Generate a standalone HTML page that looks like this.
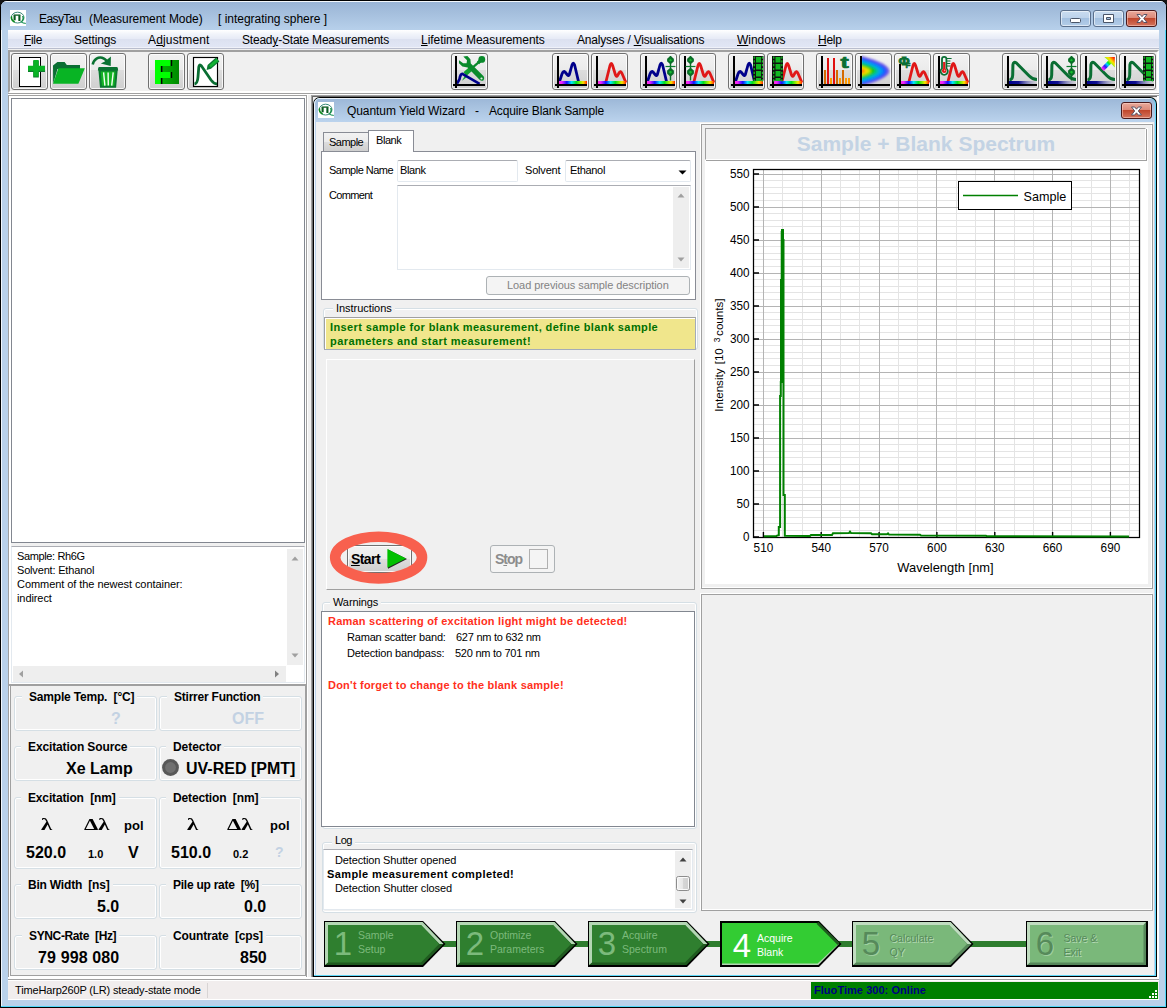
<!DOCTYPE html>
<html lang="en">
<head>
<meta charset="utf-8">
<title>EasyTau (Measurement Mode) [ integrating sphere ]</title>
<style>
*{box-sizing:border-box;margin:0;padding:0}
html,body{width:1167px;height:1008px;overflow:hidden;background:#141414}
body{position:relative;font-family:"Liberation Sans",sans-serif;font-size:11px;color:#000}
.a{position:absolute}
.t{position:absolute;white-space:nowrap;line-height:1}
svg{position:absolute;overflow:visible}
#frame{left:0;top:0;width:1167px;height:1008px;background:#b9d1ea;border:1px solid #000;border-radius:7px 7px 0 0}
#titlegrad{left:1px;top:1px;width:1165px;height:29px;border-radius:6px 6px 0 0;background:linear-gradient(#f4f8fc 0,#f4f8fc 1px,#9ab5d6 1px,#a5bfdd 12px,#b6cfea 28px)}
#client{left:8px;top:30px;width:1151px;height:970px;background:#f0f0f0}
#menubar{left:8px;top:30px;width:1151px;height:19px;background:linear-gradient(#ffffff 0,#f1f4fa 4px,#e6eaf6 9px,#dce1f0 9px,#e1e6f5 17px,#eff1f9 17px,#eff1f9 18px,#b9bdcd 18px)}
.mi{top:34px;font-size:12px;color:#000}
.mi u{text-decoration:underline;text-underline-offset:1px}
.ttl{top:13px;font-size:12px;color:#000;white-space:pre}
.cap{top:10px;height:17px;border:1px solid #5a6f8c;border-radius:3px;background:linear-gradient(#c9dcf0 0,#bdd3eb 45%,#a3c0e0 50%,#b4cde8 100%);box-shadow:inset 0 0 0 1px rgba(255,255,255,.55)}
.capx{border-color:#4a1a1c;background:linear-gradient(#e9a99b 0,#dd8a79 45%,#c0472d 50%,#d4745e 100%);box-shadow:inset 0 0 0 1px rgba(255,220,210,.5)}
.tb{top:53px;width:37px;height:37px;border:1px solid #707070;border-radius:3px;background:linear-gradient(#f2f2f2 0,#ebebeb 45%,#dddddd 46%,#cfcfcf 100%);box-shadow:inset 0 0 0 1px rgba(255,255,255,.8)}
.tb svg{left:-1px;top:-1px;width:37px;height:37px}

.gb{border:1px solid #d5dfe5;border-radius:3px;box-shadow:inset 0 0 0 1px #fff}
.gl{font-weight:bold;font-size:12px;background:#f0f0f0;padding:0 3px 0 7px;white-space:pre}
.big{font-weight:bold;font-size:16px}
.dis{color:#c3d2e3}
.sb{background:#eeeeee}
</style>
</head>
<body>
<div id="frame" class="a"></div>
<div class="a" style="left:1165px;top:8px;width:1px;height:999px;background:#4fd6f8"></div><div class="a" style="left:1px;top:1006px;width:1165px;height:1px;background:#4fd6f8"></div><div class="a" style="left:1px;top:6px;width:1px;height:1000px;background:#f0f6fc"></div>
<div id="titlegrad" class="a"></div>
<div id="client" class="a"></div>
<div class="t ttl" style="left:39px;letter-spacing:-0.576px">EasyTau</div><div class="t ttl" style="left:89px;letter-spacing:-0.062px">(Measurement Mode)</div><div class="t ttl" style="left:218px;letter-spacing:-0.018px">[ integrating sphere ]</div>
<div id="menubar" class="a"></div>
<div class="t mi" style="left:24px;letter-spacing:-0.340px"><u>F</u>ile</div>
<div class="t mi" style="left:74px;letter-spacing:-0.172px">Settin<u>g</u>s</div>
<div class="t mi" style="left:148px;letter-spacing:0.154px">A<u>d</u>justment</div>
<div class="t mi" style="left:242px;letter-spacing:-0.203px">Stead<u>y</u>-State Measurements</div>
<div class="t mi" style="left:421px;letter-spacing:-0.044px"><u>L</u>ifetime Measurements</div>
<div class="t mi" style="left:577px;letter-spacing:-0.183px">Analyses / <u>V</u>isualisations</div>
<div class="t mi" style="left:737px;letter-spacing:-0.027px"><u>W</u>indows</div>
<div class="t mi" style="left:818px;letter-spacing:-0.247px"><u>H</u>elp</div>
<div class="a cap" style="left:1060px;width:31px"></div>
<div class="a cap" style="left:1093px;width:31px"></div>
<div class="a cap capx" style="left:1126px;width:31px"></div>
<svg style="left:1060px;top:10px" width="97" height="17" viewBox="0 0 97 17">
<rect x="10.5" y="8.5" width="10" height="4" rx="1" fill="#fff" stroke="#4a5568"/>
<path d="M43.5 4.5h10v8h-10z M46.5 7.5v2h4v-2z" fill="#fff" fill-rule="evenodd" stroke="#4a5568"/>
<path d="M77 4.5h3.2l1.8 2.2l1.8-2.2h3.2l-3.2 4l3.2 4h-3.2l-1.8-2.2l-1.8 2.2h-3.2l3.2-4z" fill="#fff" stroke="#4a4a60" stroke-width=".9"/>
</svg>
<!-- app icon -->
<svg style="left:10px;top:10px" width="16" height="16" viewBox="0 0 16 16"><rect width="16" height="16" fill="#fff"/>
<ellipse cx="7.6" cy="7.6" rx="6.4" ry="5.4" fill="none" stroke="#3a8a7a" stroke-width="1"/>
<path d="M1.6 6.4q-.8 3.6 3 5.6" stroke="#0a8a1a" stroke-width="1.5" fill="none"/>
<path d="M12.6 6q1.6 3-1 5.6" stroke="#0a8a3a" stroke-width="1.3" fill="none"/>
<path d="M4.6 5.2v5M9.4 5.2v5.8" stroke="#0a5a20" stroke-width="2.1" fill="none"/>
<path d="M3.6 5.1h6.8" stroke="#0a5a20" stroke-width="1.3" fill="none"/>
<path d="M10.6 11.6q2.2 1.8 5.2 1.8" stroke="#0a8a4a" stroke-width="1" fill="none"/></svg>
<div class="a" style="left:8px;top:50px;width:1151px;height:43px;border:2px solid;border-color:#a0a0a0 #fff #fff #a0a0a0;background:#f0f0f0"></div>
<div class="a" style="left:8px;top:93px;width:1151px;height:1px;background:#a0a0a0"></div><div class="a" style="left:8px;top:94px;width:1151px;height:1px;background:#fff"></div>
<div class="a tb" style="left:11px"><svg viewBox="0 0 37 37"><rect x="8.5" y="4.5" width="21" height="29" fill="#fff" stroke="#000"/><path d="M25 7v17M17 15.5h17" stroke="#0c7a2c" stroke-width="5.6" fill="none" transform="translate(0,0.6)"/><path d="M25 7v16.4M17 15.2h17" stroke="#08b424" stroke-width="5" fill="none"/></svg></div>
<div class="a tb" style="left:50px"><svg viewBox="0 0 37 37"><path d="M3 12.6l4.4-3.6h7.2l2.2 3h13.2v4H7.5L3.2 30.6z" fill="#0a6e33"/><path d="M8.4 15.3h26.5l-6.5 15.4H3z" fill="#08b424"/></svg></div>
<div class="a tb" style="left:89px"><svg viewBox="0 0 37 37"><path d="M3.7 11.6C5 5.6 9.6 3.9 13 4.7C15.6 5.3 17.2 7 18.2 8.8" stroke="#0a7232" stroke-width="2.5" fill="none"/><path d="M21.9 3.4L21.7 12.9L11.8 10.5L15.8 8.5z" fill="#0a7232"/><path d="M9.2 15q.2-1 1.1-1h17.4q.9 0 1.1 1l.3 2.6h-20.2z" fill="#0a7232"/><path d="M9.4 17h19.3l-1.6 17.8h-16.1z" fill="#0a7a30"/><path d="M11.7 18.6h14.8l-1.2 14.2h-12.4z" fill="#14b424"/><path d="M14.6 19.4l1.3 13.2M19.1 19.4l.2 13.2M24.2 19.4l-1.5 13.2" stroke="#f4fff4" stroke-width="1.4" fill="none"/></svg></div>
<div class="a tb" style="left:148px"><svg viewBox="0 0 37 37"><rect x="7" y="7" width="24" height="24" fill="#008c00"/><linearGradient id="g4" x1="0" x2="1"><stop offset="0" stop-color="#00b400"/><stop offset="1" stop-color="#008800"/></linearGradient><rect x="13" y="7" width="18" height="24" fill="url(#g4)"/><path d="M7 7h16v6h-10v6h10v6h-10v6h-6z" fill="#00ff00"/><path d="M23.4 7v6M13.6 13v6M23.4 19v6M13.6 25v6" stroke="#000" stroke-width="1.6" fill="none"/></svg></div>
<div class="a tb" style="left:187px"><svg viewBox="0 0 37 37"><rect x="6.5" y="4.5" width="24" height="29" fill="#fff" stroke="#000" stroke-width="1.15"/><path d="M7.5 31 Q10.5 30.5 11 24 L11.8 14 Q12.3 10.5 14.5 13 L24 27 Q27 31 30 31" stroke="#0a6e33" stroke-width="2.8" fill="none"/><path d="M19.6 17l1-5l8.4-7.4l3.4 3.8l-8.4 7.4z" fill="#0a7a33"/><path d="M22 12.4l7.6-6.6l1.8 2l-7.6 6.6z" fill="#12b432"/></svg></div>
<div class="a tb" style="left:451px"><svg viewBox="0 0 37 37"><circle cx="30.8" cy="6.4" r="3.4" fill="#0a8a2c"/><path d="M29 8L27 10" stroke="#0a8a2c" stroke-width="3.2" fill="none"/><path d="M27.6 9.4L20.6 15.4" stroke="#0a8a2c" stroke-width="2.2" fill="none"/><path d="M19.6 16L14 21" stroke="#10a030" stroke-width="4.8" fill="none"/><path d="M15.2 20.2L11 27.8L16.6 23.4z" fill="#10a030"/><path d="M12.3 3.4L16.4 3.1L19.4 6.2L19.8 10.6L32.6 23.2Q34.2 25.6 32.6 27.2Q30.6 28.6 28.6 26.8L16.6 14.4L11.4 13.4L8 10.2L8 7.2L12.2 10.2L15.6 10.2L16 7.2Z" fill="#0a8a2c"/><circle cx="30.5" cy="25.5" r="1.1" fill="#e4ece4"/><path d="M6 30.6L8.4 26.4Q9.6 20.4 11.4 20.8L28.6 30.8" stroke="#00008b" stroke-width="2.7" fill="none" stroke-linejoin="round"/><g transform="translate(-1,0)"><path d="M6 3v32M3 32h32" stroke="#000" stroke-width="2" fill="none" shape-rendering="crispEdges" transform="translate(0,0)"/></g></svg></div>
<div class="a tb" style="left:552px"><svg viewBox="0 0 37 37"><path d="M7.5 28.5 L10 21 Q11.5 17.5 13 19 L15.5 22 Q16.8 23.5 17.5 21 L20 12 Q21.3 8.5 22.6 12 L26.5 28.5" stroke="#00008b" stroke-width="2.8" fill="none" stroke-linejoin="round" stroke-linecap="round"/><linearGradient id="rb1" x1="0" x2="1" y1="0" y2="0"><stop offset="0" stop-color="#ff30e0"/><stop offset=".1" stop-color="#f020ff"/><stop offset=".28" stop-color="#1010ff"/><stop offset=".45" stop-color="#00e8ff"/><stop offset=".62" stop-color="#00e020"/><stop offset=".78" stop-color="#a0f000"/><stop offset=".86" stop-color="#ffe000"/><stop offset=".94" stop-color="#ff8000"/><stop offset="1" stop-color="#ff2000"/></linearGradient><rect x="7" y="28" width="28" height="3" fill="url(#rb1)"/><path d="M6 3v32M3 32h32" stroke="#000" stroke-width="2" fill="none" shape-rendering="crispEdges" transform="translate(0,0)"/></svg></div>
<div class="a tb" style="left:591px"><svg viewBox="0 0 37 37"><path d="M15 28.5 L19 12.5 Q20.3 8.5 21.6 12.5 L24.5 22 Q25.5 24.5 26.6 22.5 L28.3 19.5 Q29.6 17.5 30.8 20 L34.5 28.5" stroke="#e01818" stroke-width="2.8" fill="none" stroke-linejoin="round" stroke-linecap="round"/><linearGradient id="rb2" x1="0" x2="1" y1="0" y2="0"><stop offset="0" stop-color="#ff30e0"/><stop offset=".1" stop-color="#f020ff"/><stop offset=".28" stop-color="#1010ff"/><stop offset=".45" stop-color="#00e8ff"/><stop offset=".62" stop-color="#00e020"/><stop offset=".78" stop-color="#a0f000"/><stop offset=".86" stop-color="#ffe000"/><stop offset=".94" stop-color="#ff8000"/><stop offset="1" stop-color="#ff2000"/></linearGradient><rect x="7" y="28" width="28" height="3" fill="url(#rb2)"/><path d="M6 3v32M3 32h32" stroke="#000" stroke-width="2" fill="none" shape-rendering="crispEdges" transform="translate(0,0)"/></svg></div>
<div class="a tb" style="left:640px"><svg viewBox="0 0 37 37"><path d="M7.5 28.5 L10 21 Q11.5 17.5 13 19 L15.5 22 Q16.8 23.5 17.5 21 L20 12 Q21.3 8.5 22.6 12 L26.5 28.5" stroke="#00008b" stroke-width="2.8" fill="none" stroke-linejoin="round" stroke-linecap="round"/><linearGradient id="rb3" x1="0" x2="1" y1="0" y2="0"><stop offset="0" stop-color="#ff30e0"/><stop offset=".1" stop-color="#f020ff"/><stop offset=".28" stop-color="#1010ff"/><stop offset=".45" stop-color="#00e8ff"/><stop offset=".62" stop-color="#00e020"/><stop offset=".78" stop-color="#a0f000"/><stop offset=".86" stop-color="#ffe000"/><stop offset=".94" stop-color="#ff8000"/><stop offset="1" stop-color="#ff2000"/></linearGradient><rect x="7" y="28" width="28" height="3" fill="url(#rb3)"/><path d="M6 3v32M3 32h32" stroke="#000" stroke-width="2" fill="none" shape-rendering="crispEdges" transform="translate(0,0)"/><path d="M30.5 3v24.5" stroke="#0a6e28" stroke-width="1.4" fill="none"/><path d="M25.5 13.5h10" stroke="#0a7a2c" stroke-width="1.2" fill="none"/><path d="M30.5 4.2l2.3 2.2v1.6l-2.3 1.9l-2.3-1.9v-1.6z" fill="#14c02c" stroke="#0a6e28" stroke-width="2.2" stroke-linejoin="round"/><path d="M30.5 16.1l2.3 2v2l-2.3 2.2l-2.3-2.2v-2z" fill="#14c02c" stroke="#0a6e28" stroke-width="2.2" stroke-linejoin="round"/></svg></div>
<div class="a tb" style="left:679px"><svg viewBox="0 0 37 37"><path d="M15 28.5 L19 12.5 Q20.3 8.5 21.6 12.5 L24.5 22 Q25.5 24.5 26.6 22.5 L28.3 19.5 Q29.6 17.5 30.8 20 L34.5 28.5" stroke="#e01818" stroke-width="2.8" fill="none" stroke-linejoin="round" stroke-linecap="round"/><linearGradient id="rb4" x1="0" x2="1" y1="0" y2="0"><stop offset="0" stop-color="#ff30e0"/><stop offset=".1" stop-color="#f020ff"/><stop offset=".28" stop-color="#1010ff"/><stop offset=".45" stop-color="#00e8ff"/><stop offset=".62" stop-color="#00e020"/><stop offset=".78" stop-color="#a0f000"/><stop offset=".86" stop-color="#ffe000"/><stop offset=".94" stop-color="#ff8000"/><stop offset="1" stop-color="#ff2000"/></linearGradient><rect x="7" y="28" width="28" height="3" fill="url(#rb4)"/><path d="M6 3v32M3 32h32" stroke="#000" stroke-width="2" fill="none" shape-rendering="crispEdges" transform="translate(0,0)"/><path d="M11.5 3v24.5" stroke="#0a6e28" stroke-width="1.4" fill="none"/><path d="M6.5 13.5h10" stroke="#0a7a2c" stroke-width="1.2" fill="none"/><path d="M11.5 4.2l2.3 2.2v1.6l-2.3 1.9l-2.3-1.9v-1.6z" fill="#14c02c" stroke="#0a6e28" stroke-width="2.2" stroke-linejoin="round"/><path d="M11.5 16.1l2.3 2v2l-2.3 2.2l-2.3-2.2v-2z" fill="#14c02c" stroke="#0a6e28" stroke-width="2.2" stroke-linejoin="round"/></svg></div>
<div class="a tb" style="left:728px"><svg viewBox="0 0 37 37"><path d="M7.5 28.5 L10 21 Q11.5 17.5 13 19 L15.5 22 Q16.8 23.5 17.5 21 L20 12 Q21.3 8.5 22.6 12 L26.5 28.5" stroke="#00008b" stroke-width="2.8" fill="none" stroke-linejoin="round" stroke-linecap="round"/><linearGradient id="rb5" x1="0" x2="1" y1="0" y2="0"><stop offset="0" stop-color="#ff30e0"/><stop offset=".1" stop-color="#f020ff"/><stop offset=".28" stop-color="#1010ff"/><stop offset=".45" stop-color="#00e8ff"/><stop offset=".62" stop-color="#00e020"/><stop offset=".78" stop-color="#a0f000"/><stop offset=".86" stop-color="#ffe000"/><stop offset=".94" stop-color="#ff8000"/><stop offset="1" stop-color="#ff2000"/></linearGradient><rect x="7" y="28" width="28" height="3" fill="url(#rb5)"/><path d="M6 3v32M3 32h32" stroke="#000" stroke-width="2" fill="none" shape-rendering="crispEdges" transform="translate(0,0)"/><rect x="25" y="3" width="10.5" height="24.6" fill="#111"/><rect x="28" y="4" width="5" height="5.5" fill="#12b822"/><rect x="28" y="11" width="5" height="5.5" fill="#12b822"/><rect x="28" y="18" width="5" height="5.5" fill="#12b822"/><rect x="28" y="25" width="5" height="3" fill="#12b822"/><path d="M26.2 3.5v25M34.4 3.5v25" stroke="#12c822" stroke-width="1.2" stroke-dasharray="2.2 1.6" fill="none"/></svg></div>
<div class="a tb" style="left:767px"><svg viewBox="0 0 37 37"><path d="M15 28.5 L19 12.5 Q20.3 8.5 21.6 12.5 L24.5 22 Q25.5 24.5 26.6 22.5 L28.3 19.5 Q29.6 17.5 30.8 20 L34.5 28.5" stroke="#e01818" stroke-width="2.8" fill="none" stroke-linejoin="round" stroke-linecap="round"/><linearGradient id="rb6" x1="0" x2="1" y1="0" y2="0"><stop offset="0" stop-color="#ff30e0"/><stop offset=".1" stop-color="#f020ff"/><stop offset=".28" stop-color="#1010ff"/><stop offset=".45" stop-color="#00e8ff"/><stop offset=".62" stop-color="#00e020"/><stop offset=".78" stop-color="#a0f000"/><stop offset=".86" stop-color="#ffe000"/><stop offset=".94" stop-color="#ff8000"/><stop offset="1" stop-color="#ff2000"/></linearGradient><rect x="7" y="28" width="28" height="3" fill="url(#rb6)"/><path d="M6 3v32M3 32h32" stroke="#000" stroke-width="2" fill="none" shape-rendering="crispEdges" transform="translate(0,0)"/><rect x="5.5" y="3" width="10.5" height="24.6" fill="#111"/><rect x="8.5" y="4" width="5" height="5.5" fill="#12b822"/><rect x="8.5" y="11" width="5" height="5.5" fill="#12b822"/><rect x="8.5" y="18" width="5" height="5.5" fill="#12b822"/><rect x="8.5" y="25" width="5" height="3" fill="#12b822"/><path d="M6.7 3.5v25M14.9 3.5v25" stroke="#12c822" stroke-width="1.2" stroke-dasharray="2.2 1.6" fill="none"/></svg></div>
<div class="a tb" style="left:816px"><svg viewBox="0 0 37 37"><rect x="8" y="17" width="2" height="14" fill="#d46a00" shape-rendering="crispEdges"/><rect x="11" y="5" width="2" height="26" fill="#e01010" shape-rendering="crispEdges"/><rect x="14" y="25" width="2" height="6" fill="#ff9a00" shape-rendering="crispEdges"/><rect x="17" y="5" width="2" height="26" fill="#e01010" shape-rendering="crispEdges"/><rect x="20" y="17" width="2" height="14" fill="#d46a00" shape-rendering="crispEdges"/><rect x="23" y="25" width="2" height="6" fill="#ff9a00" shape-rendering="crispEdges"/><rect x="26" y="17" width="2" height="14" fill="#d46a00" shape-rendering="crispEdges"/><rect x="29" y="25" width="2" height="6" fill="#ff9a00" shape-rendering="crispEdges"/><rect x="32" y="25" width="2" height="6" fill="#ff9a00" shape-rendering="crispEdges"/><path d="M6 3v32M3 32h32" stroke="#000" stroke-width="2" fill="none" shape-rendering="crispEdges" transform="translate(0,0)"/><text transform="translate(24.6,14.6) scale(1.5,1)" font-family="Liberation Sans,sans-serif" font-weight="bold" font-size="16.5" fill="#0a6e33" stroke="#0a6e33" stroke-width=".7">t</text></svg></div>
<div class="a tb" style="left:855px"><svg viewBox="0 0 37 37"><filter id="cmb" x="-10%" y="-10%" width="120%" height="120%"><feGaussianBlur stdDeviation="0.9"/></filter><clipPath id="cmc"><rect x="7" y="1" width="30" height="30"/></clipPath><g clip-path="url(#cmc)"><g filter="url(#cmb)"><path d="M6 2.8000000000000007 Q63.0 18 6 33.2Z" fill="#7a68e0"/><path d="M6 4.199999999999999 Q59.0 18 6 31.8Z" fill="#3a4cf8"/><path d="M6 5.4 Q55.0 18 6 30.6Z" fill="#1068ff"/><path d="M6 7 Q49.0 18 6 29Z" fill="#00a0f0"/><path d="M6 9 Q41.0 18 6 27Z" fill="#00c0a0"/><path d="M6 10.6 Q35.0 18 6 25.4Z" fill="#10c810"/><path d="M6 12.4 Q27.0 18 6 23.6Z" fill="#a0e000"/><path d="M6 13.6 Q22 18 6 22.4Z" fill="#f0e000"/><path d="M6 15 Q15.2 18 6 21Z" fill="#ffa000"/><path d="M6 16.2 Q11.2 18 6 19.8Z" fill="#ff4800"/></g></g><path d="M6 3v32M3 32h32" stroke="#000" stroke-width="2" fill="none" shape-rendering="crispEdges" transform="translate(0,0)"/></svg></div>
<div class="a tb" style="left:894px"><svg viewBox="0 0 37 37"><path d="M15 28.5 L19 12.5 Q20.3 8.5 21.6 12.5 L24.5 22 Q25.5 24.5 26.6 22.5 L28.3 19.5 Q29.6 17.5 30.8 20 L34.5 28.5" stroke="#e01818" stroke-width="2.8" fill="none" stroke-linejoin="round" stroke-linecap="round"/><linearGradient id="rb7" x1="0" x2="1" y1="0" y2="0"><stop offset="0" stop-color="#ff30e0"/><stop offset=".1" stop-color="#f020ff"/><stop offset=".28" stop-color="#1010ff"/><stop offset=".45" stop-color="#00e8ff"/><stop offset=".62" stop-color="#00e020"/><stop offset=".78" stop-color="#a0f000"/><stop offset=".86" stop-color="#ffe000"/><stop offset=".94" stop-color="#ff8000"/><stop offset="1" stop-color="#ff2000"/></linearGradient><rect x="7" y="28" width="28" height="3" fill="url(#rb7)"/><path d="M6 11v24M3 32h32" stroke="#000" stroke-width="2" fill="none" shape-rendering="crispEdges" transform="translate(0,0)"/><text x="4.4" y="12.4" font-family="Liberation Serif,serif" font-weight="bold" font-size="13.5" fill="#0a6e33" stroke="#0a6e33" stroke-width="1">Φ</text><text x="11.6" y="14.8" font-family="Liberation Sans,sans-serif" font-weight="bold" font-size="8" fill="#0a6e33" stroke="#0a6e33" stroke-width=".6">F</text></svg></div>
<div class="a tb" style="left:933px"><svg viewBox="0 0 37 37"><path d="M15 28.5 L19 12.5 Q20.3 8.5 21.6 12.5 L24.5 22 Q25.5 24.5 26.6 22.5 L28.3 19.5 Q29.6 17.5 30.8 20 L34.5 28.5" stroke="#e01818" stroke-width="2.8" fill="none" stroke-linejoin="round" stroke-linecap="round"/><linearGradient id="rb8" x1="0" x2="1" y1="0" y2="0"><stop offset="0" stop-color="#ff30e0"/><stop offset=".1" stop-color="#f020ff"/><stop offset=".28" stop-color="#1010ff"/><stop offset=".45" stop-color="#00e8ff"/><stop offset=".62" stop-color="#00e020"/><stop offset=".78" stop-color="#a0f000"/><stop offset=".86" stop-color="#ffe000"/><stop offset=".94" stop-color="#ff8000"/><stop offset="1" stop-color="#ff2000"/></linearGradient><rect x="7" y="28" width="28" height="3" fill="url(#rb8)"/><path d="M6 3v32M3 32h32" stroke="#000" stroke-width="2" fill="none" shape-rendering="crispEdges" transform="translate(0,0)"/><path d="M9 6a2.2 2.2 0 0 1 4.4 0v9.4a3.6 3.6 0 1 1 -4.4 0z" fill="#f4f4f4" stroke="#0a6e33" stroke-width="1.8"/><path d="M11.2 9v8" stroke="#e01818" stroke-width="2.2"/><circle cx="11.2" cy="17.8" r="2.3" fill="#e01818"/><circle cx="11.6" cy="17.4" r=".8" fill="#ff9090"/><path d="M14 5.5h4.6M14 8h3.4M14 10.5h3.4M14 13h3.4" stroke="#0a6e33" stroke-width="1.1" fill="none"/></svg></div>
<div class="a tb" style="left:1002px"><svg viewBox="0 0 37 37"><path d="M7.5 27 Q10.5 26.5 10.7 22 L10.9 12 Q11.4 8 14.4 10 L27 22.8 Q30.5 26.5 35 26.6" stroke="#0a6e33" stroke-width="3" fill="none" stroke-linejoin="round" stroke-linecap="butt"/><linearGradient id="nv9" x1="0" x2="1" y1="0" y2="0"><stop offset="0" stop-color="#00008b"/><stop offset=".35" stop-color="#101090"/><stop offset="1" stop-color="#8080c0" stop-opacity="0"/></linearGradient><rect x="7" y="28" width="28" height="3" fill="url(#nv9)"/><path d="M6 3v32M3 32h32" stroke="#000" stroke-width="2" fill="none" shape-rendering="crispEdges" transform="translate(0,0)"/></svg></div>
<div class="a tb" style="left:1041px"><svg viewBox="0 0 37 37"><path d="M7.5 27 Q10.5 26.5 10.7 22 L10.9 12 Q11.4 8 14.4 10 L27 22.8 Q30.5 26.5 35 26.6" stroke="#0a6e33" stroke-width="3" fill="none" stroke-linejoin="round" stroke-linecap="butt"/><linearGradient id="nv10" x1="0" x2="1" y1="0" y2="0"><stop offset="0" stop-color="#00008b"/><stop offset=".35" stop-color="#101090"/><stop offset="1" stop-color="#8080c0" stop-opacity="0"/></linearGradient><rect x="7" y="28" width="28" height="3" fill="url(#nv10)"/><path d="M6 3v32M3 32h32" stroke="#000" stroke-width="2" fill="none" shape-rendering="crispEdges" transform="translate(0,0)"/><path d="M30.5 3v24.5" stroke="#0a6e28" stroke-width="1.4" fill="none"/><path d="M25.5 13.5h10" stroke="#0a7a2c" stroke-width="1.2" fill="none"/><path d="M30.5 4.2l2.3 2.2v1.6l-2.3 1.9l-2.3-1.9v-1.6z" fill="#14c02c" stroke="#0a6e28" stroke-width="2.2" stroke-linejoin="round"/><path d="M30.5 16.1l2.3 2v2l-2.3 2.2l-2.3-2.2v-2z" fill="#14c02c" stroke="#0a6e28" stroke-width="2.2" stroke-linejoin="round"/></svg></div>
<div class="a tb" style="left:1080px"><svg viewBox="0 0 37 37"><path d="M7.5 27 Q10.5 26.5 10.7 22 L10.9 12 Q11.4 8 14.4 10 L27 22.8 Q30.5 26.5 35 26.6" stroke="#0a6e33" stroke-width="3" fill="none" stroke-linejoin="round" stroke-linecap="butt"/><linearGradient id="nv11" x1="0" x2="1" y1="0" y2="0"><stop offset="0" stop-color="#00008b"/><stop offset=".35" stop-color="#101090"/><stop offset="1" stop-color="#8080c0" stop-opacity="0"/></linearGradient><rect x="7" y="28" width="28" height="3" fill="url(#nv11)"/><path d="M6 3v32M3 32h32" stroke="#000" stroke-width="2" fill="none" shape-rendering="crispEdges" transform="translate(0,0)"/><linearGradient id="ar" x1="21" y1="17" x2="35" y2="3" gradientUnits="userSpaceOnUse"><stop offset="0" stop-color="#ff40d8"/><stop offset=".12" stop-color="#f020ff"/><stop offset=".28" stop-color="#2020ff"/><stop offset=".42" stop-color="#00d8ff"/><stop offset=".52" stop-color="#00e820"/><stop offset=".62" stop-color="#c0f000"/><stop offset=".7" stop-color="#ffe000"/><stop offset=".8" stop-color="#ff8000"/><stop offset=".92" stop-color="#ff1000"/></linearGradient><path d="M21 15l7.4-7.4l-4-3.6h10.4v10.6l-3.6-4l-7.4 7.4z" fill="url(#ar)"/></svg></div>
<div class="a tb" style="left:1119px"><svg viewBox="0 0 37 37"><path d="M7.5 27 Q10.5 26.5 10.7 22 L10.9 12 Q11.4 8 14.4 10 L27 22.8 Q30.5 26.5 35 26.6" stroke="#0a6e33" stroke-width="3" fill="none" stroke-linejoin="round" stroke-linecap="butt"/><linearGradient id="nv12" x1="0" x2="1" y1="0" y2="0"><stop offset="0" stop-color="#00008b"/><stop offset=".35" stop-color="#101090"/><stop offset="1" stop-color="#8080c0" stop-opacity="0"/></linearGradient><rect x="7" y="28" width="28" height="3" fill="url(#nv12)"/><path d="M6 3v32M3 32h32" stroke="#000" stroke-width="2" fill="none" shape-rendering="crispEdges" transform="translate(0,0)"/><rect x="24" y="3" width="10.5" height="24.6" fill="#111"/><rect x="27" y="4" width="5" height="5.5" fill="#12b822"/><rect x="27" y="11" width="5" height="5.5" fill="#12b822"/><rect x="27" y="18" width="5" height="5.5" fill="#12b822"/><rect x="27" y="25" width="5" height="3" fill="#12b822"/><path d="M25.2 3.5v25M33.4 3.5v25" stroke="#12c822" stroke-width="1.2" stroke-dasharray="2.2 1.6" fill="none"/></svg></div>
<!-- left dock panel -->
<div class="a" style="left:8px;top:95px;width:300px;height:883px;background:#fff"></div><div class="a" style="left:8px;top:95px;width:299px;height:883px;background:#fff;border:1px solid #a0a0a0;border-width:1px 1px 0 1px"></div>
<div class="a" style="left:8px;top:979px;width:1151px;height:1px;background:#a0a0a0"></div>
<div class="a" style="left:8px;top:977px;width:1151px;height:2px;background:#fff"></div>
<div class="a" style="left:8px;top:980px;width:1151px;height:1px;background:#fff"></div>
<div class="a" style="left:11px;top:98px;width:294px;height:445px;background:#fff;border:1px solid #828790"></div>
<div class="a" style="left:11px;top:543px;width:294px;height:3px;background:#f0f0f0"></div>
<!-- memo -->
<div class="a" style="left:11px;top:546px;width:294px;height:137px;background:#fff;border:1px solid #e3e9ef;border-top-color:#abadb3"></div>
<div class="a sb" style="left:287px;top:549px;width:16px;height:116px"></div>
<div class="a sb" style="left:13px;top:666px;width:273px;height:16px"></div>
<svg style="left:287px;top:549px" width="16" height="132" viewBox="0 0 16 132"><path d="M4.5 11.5l3.5-4l3.5 4z" fill="#a0a0a0"/><path d="M4.5 104.5l3.5 4l3.5-4z" fill="#a0a0a0"/></svg>
<svg style="left:13px;top:667px" width="272" height="14" viewBox="0 0 272 14"><path d="M10 3.5l-4 3.5l4 3.5z" fill="#a0a0a0"/><path d="M262 3.5l4 3.5l-4 3.5z" fill="#808080"/></svg>
<div class="t" style="left:17px;top:551px;letter-spacing:-0.371px">Sample: Rh6G</div><div class="t" style="left:17px;top:565px;letter-spacing:-0.177px">Solvent: Ethanol</div><div class="t" style="left:17px;top:579px;letter-spacing:-0.060px">Comment of the newest container:</div><div class="t" style="left:17px;top:593px;letter-spacing:-0.084px">indirect</div>
<!-- status panel -->
<div class="a" style="left:9px;top:684px;width:297px;height:2px;background:#a0a0a0"></div>
<div class="a" style="left:10px;top:686px;width:296px;height:290px;background:#f0f0f0;border:1px solid #a0a0a0;border-width:0 1px 1px 1px"></div>
<div class="a gb" style="left:14px;top:696px;width:143px;height:35px"></div>
<div class="a gb" style="left:159px;top:696px;width:143px;height:35px"></div>
<div class="a gb" style="left:14px;top:746px;width:143px;height:35px"></div>
<div class="a gb" style="left:159px;top:746px;width:143px;height:35px"></div>
<div class="a gb" style="left:14px;top:797px;width:143px;height:72px"></div>
<div class="a gb" style="left:159px;top:797px;width:143px;height:72px"></div>
<div class="a gb" style="left:14px;top:884px;width:143px;height:35px"></div>
<div class="a gb" style="left:159px;top:884px;width:143px;height:35px"></div>
<div class="a gb" style="left:14px;top:935px;width:143px;height:35px"></div>
<div class="a gb" style="left:159px;top:935px;width:143px;height:35px"></div>
<div class="t gl" style="left:22px;top:691px;letter-spacing:-0.183px">Sample Temp.  [°C]</div>
<div class="t gl" style="left:167px;top:691px;letter-spacing:-0.226px">Stirrer Function</div>
<div class="t gl" style="left:21px;top:741px;letter-spacing:-0.122px">Excitation Source</div>
<div class="t gl" style="left:166px;top:741px;letter-spacing:-0.061px">Detector</div>
<div class="t gl" style="left:21px;top:792px;letter-spacing:-0.157px">Excitation  [nm]</div>
<div class="t gl" style="left:166px;top:792px;letter-spacing:-0.136px">Detection  [nm]</div>
<div class="t gl" style="left:21px;top:879px;letter-spacing:-0.203px">Bin Width  [ns]</div>
<div class="t gl" style="left:166px;top:879px;letter-spacing:-0.255px">Pile up rate  [%]</div>
<div class="t gl" style="left:22px;top:930px;letter-spacing:-0.365px">SYNC-Rate  [Hz]</div>
<div class="t gl" style="left:166px;top:930px;letter-spacing:-0.132px">Countrate  [cps]</div>
<div class="t big dis" style="left:111px;top:711px">?</div>
<div class="t big dis" style="left:232px;top:711px">OFF</div>
<div class="t big" style="left:66px;top:761px">Xe Lamp</div>
<div class="t big" style="left:186px;top:761px">UV-RED [PMT]</div>
<svg style="left:161px;top:758px" width="19" height="19" viewBox="0 0 19 19"><circle cx="9.5" cy="9.5" r="8.4" fill="#585858"/><circle cx="9.5" cy="9.5" r="5.4" fill="#707070"/></svg>
<div class="t" style="left:41px;top:816px;font-size:17.5px;font-weight:bold;font-family:'Liberation Serif',serif;transform:scaleX(1.3);transform-origin:0 0">λ</div>
<div class="t" style="left:84px;top:816px;font-size:17.5px;font-weight:bold;font-family:'Liberation Serif',serif;transform:scaleX(1.3);transform-origin:0 0">Δλ</div>
<div class="t" style="left:124px;top:819px;font-size:13px;font-weight:bold">pol</div>
<div class="t" style="left:187px;top:816px;font-size:17.5px;font-weight:bold;font-family:'Liberation Serif',serif;transform:scaleX(1.3);transform-origin:0 0">λ</div>
<div class="t" style="left:227px;top:816px;font-size:17.5px;font-weight:bold;font-family:'Liberation Serif',serif;transform:scaleX(1.3);transform-origin:0 0">Δλ</div>
<div class="t" style="left:270px;top:819px;font-size:13px;font-weight:bold">pol</div>
<div class="t big" style="left:26px;top:845px">520.0</div>
<div class="t" style="left:88px;top:849px;font-size:11px;font-weight:bold">1.0</div>
<div class="t big" style="left:128px;top:845px">V</div>
<div class="t big" style="left:171px;top:845px">510.0</div>
<div class="t" style="left:233px;top:849px;font-size:11px;font-weight:bold">0.2</div>
<div class="t big dis" style="left:275px;top:845px;font-size:14px">?</div>
<div class="t big" style="left:97px;top:899px">5.0</div>
<div class="t big" style="left:244px;top:899px">0.0</div>
<div class="t big" style="left:38px;top:950px;letter-spacing:0.132px">79 998 080</div>
<div class="t big" style="left:240px;top:950px">850</div>
<!-- MDI area + child window -->
<div class="a" style="left:311px;top:95px;width:848px;height:882px;background:#f0f0f0;border:1px solid #a0a0a0;border-width:1px 0 0 1px"></div>
<div class="a" style="left:312px;top:96px;width:847px;height:881px;border:1px solid #696969;border-width:1px 0 0 1px"></div>
<div class="a" style="left:1157px;top:96px;width:2px;height:881px;background:#fff"></div>
<div class="a" style="left:313px;top:97px;width:844px;height:880px;background:#000;border-radius:7px 7px 0 0"></div>
<div class="a" style="left:314px;top:98px;width:842px;height:878px;background:#5fd8f8;border-radius:6px 6px 0 0"></div>
<div class="a" style="left:314px;top:98px;width:841px;height:877px;border-radius:6px 6px 0 0;background:linear-gradient(#eaf2fa 0,#eaf2fa 1px,#9db8d8 1px,#a9c3e0 10px,#bbd3ed 24px,#bbd3ed 100%);box-shadow:inset 1px 0 0 rgba(255,255,255,.85)"></div>
<div class="a" style="left:316px;top:122px;width:838px;height:853px;background:#f0f0f0"></div>
<svg style="left:318px;top:102px" width="16" height="16" viewBox="0 0 16 16"><rect width="16" height="16" fill="#fff"/>
<ellipse cx="7.6" cy="7.6" rx="6.4" ry="5.4" fill="none" stroke="#3a8a7a" stroke-width="1"/>
<path d="M1.6 6.4q-.8 3.6 3 5.6" stroke="#0a8a1a" stroke-width="1.5" fill="none"/>
<path d="M12.6 6q1.6 3-1 5.6" stroke="#0a8a3a" stroke-width="1.3" fill="none"/>
<path d="M4.6 5.2v5M9.4 5.2v5.8" stroke="#0a5a20" stroke-width="2.1" fill="none"/>
<path d="M3.6 5.1h6.8" stroke="#0a5a20" stroke-width="1.3" fill="none"/>
<path d="M10.6 11.6q2.2 1.8 5.2 1.8" stroke="#0a8a4a" stroke-width="1" fill="none"/></svg>
<div class="t" style="left:347px;top:105px;font-size:12px;letter-spacing:-0.070px">Quantum Yield Wizard</div><div class="t" style="left:475px;top:105px;font-size:12px">-</div><div class="t" style="left:489px;top:105px;font-size:12px;letter-spacing:-0.153px">Acquire Blank Sample</div>
<div class="a cap capx" style="left:1121px;top:102px;width:31px;height:17px"></div>
<svg style="left:1121px;top:102px" width="31" height="18" viewBox="0 0 31 18"><path d="M10.5 5h3.2l1.8 2.2l1.8-2.2h3.2l-3.2 4l3.2 4h-3.2l-1.8-2.2l-1.8 2.2h-3.2l3.2-4z" fill="#fff" stroke="#4a4a60" stroke-width=".9"/></svg>

<!-- tabs -->
<div class="a" style="left:321px;top:151px;width:375px;height:149px;background:#fff;border:1px solid #898c95"></div>
<div class="a" style="left:323px;top:132px;width:46px;height:19px;border:1px solid #898c95;border-bottom:0;background:linear-gradient(#f2f2f2 0,#ebebeb 50%,#dddddd 50%,#cfcfcf 100%)"></div>
<div class="a" style="left:368px;top:130px;width:46px;height:22px;border:1px solid #898c95;border-bottom:0;background:#fff"></div>
<div class="t" style="left:329px;top:137px;letter-spacing:-0.516px">Sample</div>
<div class="t" style="left:376px;top:135px;letter-spacing:-0.426px">Blank</div>
<div class="t" style="left:329px;top:165px;letter-spacing:-0.509px">Sample Name</div>
<div class="a" style="left:397px;top:160px;width:121px;height:22px;background:#fff;border:1px solid #e3e9ef;border-top-color:#abadb3;border-radius:2px"></div>
<div class="t" style="left:400px;top:165px;letter-spacing:-0.366px">Blank</div>
<div class="t" style="left:525px;top:165px;letter-spacing:-0.186px">Solvent</div>
<div class="a" style="left:565px;top:160px;width:126px;height:22px;background:#fff;border:1px solid #e3e9ef;border-top-color:#abadb3;border-radius:2px"></div>
<div class="t" style="left:570px;top:165px;letter-spacing:-0.330px">Ethanol</div>
<svg style="left:678px;top:170px" width="9" height="5" viewBox="0 0 9 5"><path d="M0.5 0.5h8l-4 4z" fill="#000"/></svg>
<div class="t" style="left:329px;top:190px;letter-spacing:-0.641px">Comment</div>
<div class="a" style="left:397px;top:185px;width:294px;height:85px;background:#fff;border:1px solid #e3e9ef;border-top-color:#abadb3"></div>
<div class="a sb" style="left:673px;top:187px;width:16px;height:81px"></div>
<svg style="left:673px;top:187px" width="16" height="81" viewBox="0 0 16 81"><path d="M4.5 10.5l3.5-4l3.5 4z" fill="#a0a0a0"/><path d="M4.5 70.5l3.5 4l3.5-4z" fill="#a0a0a0"/></svg>
<div class="a" style="left:486px;top:276px;width:204px;height:19px;background:#f4f4f4;border:1px solid #adb2b5;border-radius:3px"></div>
<div class="t" style="left:507px;top:280px;color:#838383;letter-spacing:-0.068px">Load previous sample description</div>

<!-- instructions -->
<div class="a gb" style="left:323px;top:308px;width:375px;height:42px"></div>
<div class="t" style="left:333px;top:303px;background:#f0f0f0;padding:0 3px;letter-spacing:-0.046px">Instructions</div>
<div class="a" style="left:324px;top:317px;width:372px;height:33px;background:#f0e68c;border:1px solid;border-color:#a0a0a0 #a4acb8 #a4acb8 #a0a0a0;box-shadow:inset 1px 1px 0 #fff"></div>
<div class="t" style="left:330px;top:322px;font-weight:bold;color:#007000;letter-spacing:0.390px">Insert sample for blank measurement, define blank sample</div><div class="t" style="left:330px;top:336px;font-weight:bold;color:#007000;letter-spacing:0.422px">parameters and start measurement!</div>

<!-- start/stop panel -->
<div class="a" style="left:326px;top:359px;width:369px;height:231px;border:1px solid;border-color:#fff #a0a0a0 #a0a0a0 #fff"></div>
<div class="a" style="left:347px;top:545px;width:65px;height:28px;border:1px solid #707070;border-radius:3px;background:linear-gradient(#f2f2f2 0,#ebebeb 48%,#dddddd 50%,#cfcfcf 100%);box-shadow:inset 0 0 0 1px rgba(255,255,255,.8)"></div>
<div class="t" style="left:351px;top:552px;font-size:14px;font-weight:bold;letter-spacing:-0.581px"><u>S</u>tart</div>
<svg style="left:386px;top:547px" width="24" height="24" viewBox="0 0 24 24"><path d="M2 2.5l19 9.6l-19 9.6z" fill="#222"/><path d="M1.4 2l18.6 9.6l-18.6 9.2z" fill="#00c000"/></svg>
<svg style="left:326px;top:528px" width="106" height="60" viewBox="0 0 106 60"><ellipse cx="52.6" cy="29.6" rx="43.4" ry="20.8" fill="none" stroke="#f8604e" stroke-width="10.6"/></svg>
<div class="a" style="left:490px;top:545px;width:65px;height:28px;border:1px solid #adb2b5;border-radius:3px;background:#f4f4f4"></div>
<div class="t" style="left:495px;top:552px;font-size:14px;font-weight:bold;color:#8c8c8c;letter-spacing:-0.981px">S<u>t</u>op</div>
<div class="a" style="left:529px;top:549px;width:19px;height:20px;border:1px solid #b0b0b0;background:#f4f4f4"></div>

<!-- warnings -->
<div class="a gb" style="left:322px;top:602px;width:375px;height:227px"></div>
<div class="t" style="left:330px;top:597px;background:#f0f0f0;padding:0 3px;letter-spacing:-0.108px">Warnings</div>
<div class="a" style="left:321px;top:611px;width:374px;height:216px;background:#fff;border:1px solid #828790"></div>
<div class="t" style="left:328px;top:616px;font-weight:bold;color:#ff3020;letter-spacing:0.222px">Raman scattering of excitation light might be detected!</div>
<div class="t" style="left:347px;top:632px;letter-spacing:-0.180px">Raman scatter band:</div><div class="t" style="left:456px;top:632px;letter-spacing:-0.248px">627 nm to 632 nm</div>
<div class="t" style="left:347px;top:648px;letter-spacing:-0.152px">Detection bandpass:</div><div class="t" style="left:455px;top:648px;letter-spacing:-0.248px">520 nm to 701 nm</div>
<div class="t" style="left:328px;top:680px;font-weight:bold;color:#ff3020;letter-spacing:0.221px">Don't forget to change to the blank sample!</div>

<!-- log -->
<div class="a gb" style="left:322px;top:842px;width:375px;height:71px"></div>
<div class="t" style="left:332px;top:835px;background:#f0f0f0;padding:0 3px;letter-spacing:-0.453px">Log</div>
<div class="a" style="left:323px;top:849px;width:370px;height:61px;background:#fff;border:1px solid #e3e9ef;border-top-color:#abadb3"></div>
<div class="t" style="left:335px;top:855px;letter-spacing:-0.149px">Detection Shutter opened</div>
<div class="t" style="left:327px;top:869px;font-weight:bold;letter-spacing:0.405px">Sample measurement completed!</div>
<div class="t" style="left:335px;top:883px;letter-spacing:-0.123px">Detection Shutter closed</div>
<div class="a sb" style="left:675px;top:851px;width:16px;height:57px"></div>
<svg style="left:675px;top:851px" width="16" height="57" viewBox="0 0 16 57"><path d="M4.5 10.5l3.5-4l3.5 4z" fill="#404040"/><path d="M4.5 48.5l3.5 4l3.5-4z" fill="#404040"/><linearGradient id="thg" x1="0" x2="1"><stop offset="0" stop-color="#f4f4f4"/><stop offset=".5" stop-color="#e6e6e6"/><stop offset=".5" stop-color="#d6d6d6"/><stop offset="1" stop-color="#cfcfcf"/></linearGradient><rect x="1.5" y="25.500" width="13" height="14" rx="2" fill="url(#thg)" stroke="#8c8c8c"/><rect x="2.500" y="26.500" width="11" height="12" rx="1" fill="none" stroke="#fafafa"/></svg>
<!-- chart panel -->
<div class="a" style="left:701px;top:124px;width:452px;height:465px;background:#f0f0f0;border:1px solid #a0a0a0;box-shadow:-1px -1px 0 #fff,inset -1px -1px 0 #fff"></div>
<div class="a" style="left:705px;top:128px;width:443px;height:456px;background:#fff"></div>
<div class="a" style="left:705px;top:128px;width:441px;height:32px;background:#f0f0f0;border:1px solid;border-color:#a0a0a0 #fff #fff #a0a0a0;box-shadow:1px 1px 0 #a0a0a0"></div>
<div class="t" style="left:705px;top:133px;width:442px;text-align:center;font-size:21px;font-weight:bold;color:#c3d3e4">Sample + Blank Spectrum</div>
<div class="a" style="left:701px;top:594px;width:452px;height:317px;background:#f0f0f0;border:1px solid #a0a0a0;box-shadow:-1px -1px 0 #fff,inset -1px -1px 0 #fff"></div>
<svg style="left:0;top:0" width="1167" height="1008" viewBox="0 0 1167 1008" font-family="Liberation Sans,sans-serif" font-size="12">
<path d="M782.7 169V537M802.0 169V537M840.5 169V537M859.8 169V537M898.4 169V537M917.6 169V537M956.2 169V537M975.5 169V537M1014.0 169V537M1033.3 169V537M1071.9 169V537M1091.2 169V537M1129.7 169V537M753 530.4H1139M753 523.8H1139M753 517.2H1139M753 510.6H1139M753 497.4H1139M753 490.8H1139M753 484.2H1139M753 477.6H1139M753 464.4H1139M753 457.8H1139M753 451.2H1139M753 444.6H1139M753 431.4H1139M753 424.8H1139M753 418.2H1139M753 411.6H1139M753 398.4H1139M753 391.8H1139M753 385.2H1139M753 378.6H1139M753 365.4H1139M753 358.8H1139M753 352.2H1139M753 345.6H1139M753 332.4H1139M753 325.8H1139M753 319.2H1139M753 312.6H1139M753 299.4H1139M753 292.8H1139M753 286.2H1139M753 279.6H1139M753 266.4H1139M753 259.8H1139M753 253.2H1139M753 246.6H1139M753 233.4H1139M753 226.8H1139M753 220.2H1139M753 213.6H1139M753 200.4H1139M753 193.8H1139M753 187.2H1139M753 180.6H1139" stroke="#e4e4e4" stroke-width="1" fill="none" shape-rendering="crispEdges"/>
<path d="M763.4 169V537M821.2 169V537M879.1 169V537M936.9 169V537M994.8 169V537M1052.6 169V537M1110.4 169V537M753 504.0H1139M753 471.0H1139M753 438.0H1139M753 405.0H1139M753 372.0H1139M753 339.0H1139M753 306.0H1139M753 273.0H1139M753 240.0H1139M753 207.0H1139M753 174.0H1139" stroke="#b4b4b4" stroke-width="1" fill="none" shape-rendering="crispEdges"/>
<rect x="753.5" y="169.5" width="386" height="368" fill="none" stroke="#000" stroke-width="1.25"/>
<path d="M753 537.0h6M753 504.0h6M753 471.0h6M753 438.0h6M753 405.0h6M753 372.0h6M753 339.0h6M753 306.0h6M753 273.0h6M753 240.0h6M753 207.0h6M753 174.0h6M763.4 537v-5M821.2 537v-5M879.1 537v-5M936.9 537v-5M994.8 537v-5M1052.6 537v-5M1110.4 537v-5" stroke="#000" stroke-width="1.4" fill="none"/>
<path d="M764 536.3 L776 536.3 L777 535.6 L778.8 535.2 L778.8 527 L780.1 527 L780.1 396 L780.8 396 L780.8 382 L781 382 L781 280 L782 280 L782 230 L783 230 L783 240 L783.5 240 L783.5 495 L784.8 495 L784.8 535.8 L810 536 L811 535 L832 535 L833 533.2 L849 533 L850 531.6 L851 533 L871 533.2 L872 534.2 L887 534.2 L888 533.4 L889 534.6 L920 534.8 L921 535.6 L986 535.8 L987 536.3 L1129 536.4" stroke="#008000" stroke-width="2" fill="none" stroke-linejoin="miter"/>
<path d="M782.2 231V383" stroke="#008000" stroke-width="3" fill="none"/>
<text x="749.5" y="540.8" text-anchor="end" font-size="12.8" textLength="6.5" lengthAdjust="spacingAndGlyphs">0</text><text x="749.5" y="507.8" text-anchor="end" font-size="12.8" textLength="13.1" lengthAdjust="spacingAndGlyphs">50</text><text x="749.5" y="474.8" text-anchor="end" font-size="12.8" textLength="19.6" lengthAdjust="spacingAndGlyphs">100</text><text x="749.5" y="441.8" text-anchor="end" font-size="12.8" textLength="19.6" lengthAdjust="spacingAndGlyphs">150</text><text x="749.5" y="408.8" text-anchor="end" font-size="12.8" textLength="19.6" lengthAdjust="spacingAndGlyphs">200</text><text x="749.5" y="375.8" text-anchor="end" font-size="12.8" textLength="19.6" lengthAdjust="spacingAndGlyphs">250</text><text x="749.5" y="342.8" text-anchor="end" font-size="12.8" textLength="19.6" lengthAdjust="spacingAndGlyphs">300</text><text x="749.5" y="309.8" text-anchor="end" font-size="12.8" textLength="19.6" lengthAdjust="spacingAndGlyphs">350</text><text x="749.5" y="276.8" text-anchor="end" font-size="12.8" textLength="19.6" lengthAdjust="spacingAndGlyphs">400</text><text x="749.5" y="243.8" text-anchor="end" font-size="12.8" textLength="19.6" lengthAdjust="spacingAndGlyphs">450</text><text x="749.5" y="210.8" text-anchor="end" font-size="12.8" textLength="19.6" lengthAdjust="spacingAndGlyphs">500</text><text x="749.5" y="177.8" text-anchor="end" font-size="12.8" textLength="19.6" lengthAdjust="spacingAndGlyphs">550</text>
<text x="763.4" y="552.4" text-anchor="middle" font-size="12.8" textLength="19.6" lengthAdjust="spacingAndGlyphs">510</text><text x="821.2" y="552.4" text-anchor="middle" font-size="12.8" textLength="19.6" lengthAdjust="spacingAndGlyphs">540</text><text x="879.1" y="552.4" text-anchor="middle" font-size="12.8" textLength="19.6" lengthAdjust="spacingAndGlyphs">570</text><text x="936.9" y="552.4" text-anchor="middle" font-size="12.8" textLength="19.6" lengthAdjust="spacingAndGlyphs">600</text><text x="994.8" y="552.4" text-anchor="middle" font-size="12.8" textLength="19.6" lengthAdjust="spacingAndGlyphs">630</text><text x="1052.6" y="552.4" text-anchor="middle" font-size="12.8" textLength="19.6" lengthAdjust="spacingAndGlyphs">660</text><text x="1110.4" y="552.4" text-anchor="middle" font-size="12.8" textLength="19.6" lengthAdjust="spacingAndGlyphs">690</text>
<text x="945.5" y="571.8" text-anchor="middle" font-size="13.4" textLength="96.3" lengthAdjust="spacingAndGlyphs">Wavelength [nm]</text>
<text transform="translate(723.2,411.7) rotate(-90)" font-size="11.6"><tspan x="0">Intensity</tspan><tspan x="47.4">[10</tspan><tspan x="69.4" dy="-3.4" font-size="8.4">3</tspan><tspan x="75.8" dy="3.4">counts]</tspan></text>
<rect x="958.5" y="181.5" width="113" height="28" fill="#fff" stroke="#000"/><path d="M963 195.5h55" stroke="#008000" stroke-width="1.4"/><text x="1023.5" y="200.7" font-size="12.6">Sample</text>
</svg>
<!-- wizard steps -->
<svg style="left:0;top:0" width="1167" height="1008" viewBox="0 0 1167 1008" font-family="Liberation Sans,sans-serif">
<rect x="440" y="941" width="600" height="6" fill="#2e7d2e"/>
<path d="M324 921H423L445.5 944L423 967H324Z" fill="#000"/><path d="M325 922H422.5L443.5 944L422.5 965H325Z" fill="#1f5a1f"/><path d="M325 922H422.5L443.5 944L439.5 944L421 925H328V962.5L325 965Z" fill="#b4d6b4"/><path d="M328 925H421L439.1 944L421 962.5H328Z" fill="#2f7f2f"/><text x="333.7" y="955" font-size="33" fill="#7cba7c">1</text><text x="358" y="939" font-size="10.5" fill="#7cba7c">Sample</text><text x="358" y="953" font-size="10.5" fill="#7cba7c">Setup</text>
<path d="M456 921H555L577.5 944L555 967H456Z" fill="#000"/><path d="M457 922H554.5L575.5 944L554.5 965H457Z" fill="#1f5a1f"/><path d="M457 922H554.5L575.5 944L571.5 944L553 925H460V962.5L457 965Z" fill="#b4d6b4"/><path d="M460 925H553L571.1 944L553 962.5H460Z" fill="#2f7f2f"/><text x="465.7" y="955" font-size="33" fill="#7cba7c">2</text><text x="490" y="939" font-size="10.5" fill="#7cba7c">Optimize</text><text x="490" y="953" font-size="10.5" fill="#7cba7c">Parameters</text>
<path d="M588 921H687L709.5 944L687 967H588Z" fill="#000"/><path d="M589 922H686.5L707.5 944L686.5 965H589Z" fill="#1f5a1f"/><path d="M589 922H686.5L707.5 944L703.5 944L685 925H592V962.5L589 965Z" fill="#b4d6b4"/><path d="M592 925H685L703.1 944L685 962.5H592Z" fill="#2f7f2f"/><text x="597.7" y="955" font-size="33" fill="#7cba7c">3</text><text x="622" y="939" font-size="10.5" fill="#7cba7c">Acquire</text><text x="622" y="953" font-size="10.5" fill="#7cba7c">Spectrum</text>
<path d="M720 921H819L841.5 944L819 967H720Z" fill="#000"/><path d="M722 923H818L838.9 944L818.4 965H722Z" fill="#b4d6b4"/><path d="M722 923H818L838.5 944L817.6 963.6H722Z" fill="#33cc33"/><path d="M817.4 922.8L838.7 944" stroke="#1f5a1f" stroke-width="2.6" fill="none"/><text x="732.7" y="957" font-size="33" fill="#ffffff">4</text><text x="757" y="942" font-size="10.5" fill="#ffffff">Acquire</text><text x="757" y="956" font-size="10.5" fill="#ffffff">Blank</text>
<path d="M852 921H951L973.5 944L951 967H852Z" fill="#000"/><path d="M853 922H950.5L971.5 944L950.5 965H853Z" fill="#56875a"/><path d="M853 922H950.5L971.5 944L967.5 944L949 925H856V962.5L853 965Z" fill="#c0dcc0"/><path d="M856 925H949L967.1 944L949 962.5H856Z" fill="#7ab87a"/><text x="862.7" y="956" font-size="33" fill="#9fcf9f">5</text><text x="890.5" y="943" font-size="10.5" fill="#b4dab4">Calculate</text><text x="890.5" y="957" font-size="10.5" fill="#b4dab4">QY</text><text x="861.7" y="955" font-size="33" fill="#568a5a">5</text><text x="889.5" y="942" font-size="10.5" fill="#568a5a">Calculate</text><text x="889.5" y="956" font-size="10.5" fill="#568a5a">QY</text>
<path d="M1026 921H1148V967H1026Z" fill="#000"/><path d="M1027 922H1146V965H1027Z" fill="#56875a"/><path d="M1027 922H1146L1143.5 925H1030L1030 962.5L1027 965Z" fill="#c0dcc0"/><path d="M1030 925H1143.5V962.5H1030Z" fill="#7ab87a"/><text x="1036.7" y="956" font-size="33" fill="#9fcf9f">6</text><text x="1064.5" y="943" font-size="10.5" fill="#b4dab4">Save &amp;</text><text x="1064.5" y="957" font-size="10.5" fill="#b4dab4">Exit</text><text x="1035.7" y="955" font-size="33" fill="#568a5a">6</text><text x="1063.5" y="942" font-size="10.5" fill="#568a5a">Save &amp;</text><text x="1063.5" y="956" font-size="10.5" fill="#568a5a">Exit</text>
</svg>
<!-- status bar -->
<div class="a" style="left:8px;top:981px;width:1151px;height:19px;background:#f1eded;border-bottom:1px solid #fff"></div>
<div class="a" style="left:207px;top:983px;width:1px;height:15px;background:#d8d4d4"></div>
<div class="a" style="left:811px;top:982px;width:347px;height:17px;background:#008000"></div>
<div class="t" style="left:15px;top:985px;font-size:11px;letter-spacing:-0.162px">TimeHarp260P (LR) steady-state mode</div>
<div class="t" style="left:814px;top:985px;font-size:11px;font-weight:bold;color:#000080;letter-spacing:0.043px">FluoTime 300: Online</div>
<svg style="left:1146px;top:987px" width="13" height="13" viewBox="0 0 13 13" shape-rendering="crispEdges"><path d="M9 1h2v2h-2zM6 4h2v2h-2zM9 4h2v2h-2zM3 7h2v2h-2zM6 7h2v2h-2zM9 7h2v2h-2z" fill="#fff" transform="translate(0,2)"/></svg>
</body>
</html>
